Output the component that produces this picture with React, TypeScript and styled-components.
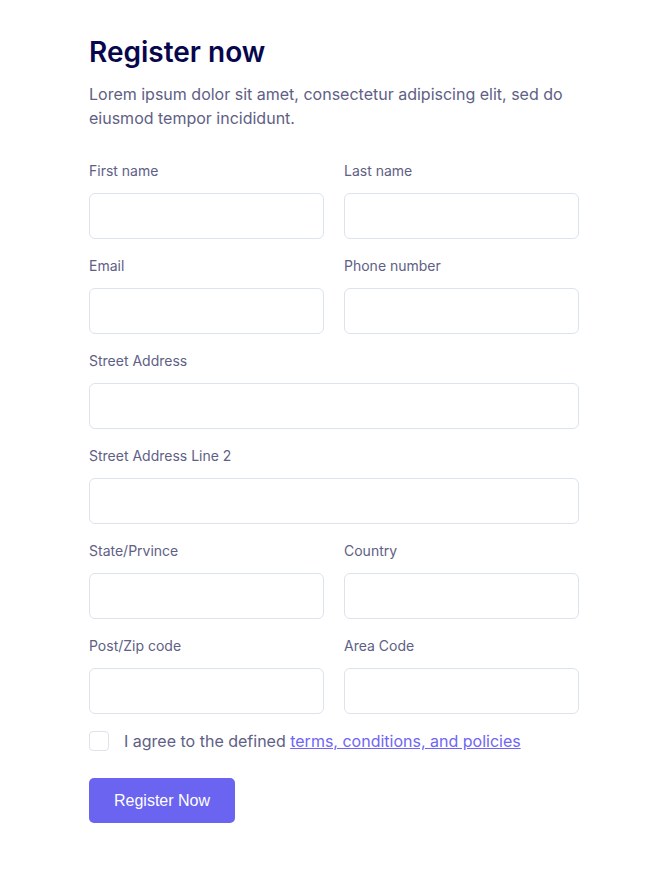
import React from "react";
import { createGlobalStyle, styled } from "styled-components";

const GlobalStyle = createGlobalStyle`
  * { box-sizing: border-box; }
  body {
    margin: 0;
    background: #ffffff;
    font-family: Inter, "Noto Sans", sans-serif;
  }
`;

type Field = { label: string; full?: boolean };

const fields: Field[] = [
  { label: "First name" },
  { label: "Last name" },
  { label: "Email" },
  { label: "Phone number" },
  { label: "Street Address", full: true },
  { label: "Street Address Line 2", full: true },
  { label: "State/Prvince" },
  { label: "Country" },
  { label: "Post/Zip code" },
  { label: "Area Code" },
];

function App() {
  return (
    <>
      <GlobalStyle />
      <Wrapper>
        <Title>Register now</Title>
        <Intro>
          Lorem ipsum dolor sit amet, consectetur adipiscing elit, sed do
          eiusmod tempor incididunt.
        </Intro>
        <Form onSubmit={(e) => e.preventDefault()}>
          <Grid>
            {fields.map((f) => (
              <Group key={f.label} $full={f.full}>
                <Label>{f.label}</Label>
                <Input type="text" />
              </Group>
            ))}
          </Grid>
          <Agree>
            <Check type="checkbox" />
            <AgreeText>
              I agree to the defined{" "}
              <TermsLink href="#">terms, conditions, and policies</TermsLink>
            </AgreeText>
          </Agree>
          <SubmitBtn type="submit">Register Now</SubmitBtn>
        </Form>
      </Wrapper>
    </>
  );
}

export default App;

const Wrapper = styled.div`
  width: 100%;
  padding: 34px 90px 0 89px;
`;

const Title = styled.h1`
  margin: 0 0 12px;
  font-size: 28px;
  line-height: 36px;
  font-weight: 600;
  color: #07074d;
`;

const Intro = styled.p`
  margin: 0;
  font-size: 16px;
  line-height: 24px;
  color: #5e6085;
`;

const Form = styled.form`
  margin-top: 31px;
`;

const Grid = styled.div`
  display: grid;
  grid-template-columns: 1fr 1fr;
  column-gap: 20px;
  row-gap: 17px;
`;

const Group = styled.div<{ $full?: boolean }>`
  display: flex;
  flex-direction: column;
  grid-column: ${({ $full }) => ($full ? "1 / -1" : "auto")};
`;

const Label = styled.label`
  margin-bottom: 12px;
  font-size: 14px;
  line-height: 20px;
  color: #5e6085;
`;

const Input = styled.input`
  width: 100%;
  height: 46px;
  padding: 0 16px;
  border: 1px solid #dde3ec;
  border-radius: 6px;
  background: #ffffff;
  font-family: inherit;
  font-size: 16px;
  color: #07074d;
  outline: none;
`;

const Agree = styled.div`
  display: flex;
  align-items: center;
  gap: 15px;
  margin-top: 17px;
`;

const Check = styled.input`
  appearance: none;
  width: 20px;
  height: 20px;
  margin: 0;
  border: 1px solid #dde3ec;
  border-radius: 4px;
  background: #ffffff;
`;

const AgreeText = styled.span`
  font-size: 16px;
  line-height: 20px;
  color: #5e6085;
`;

const TermsLink = styled.a`
  color: #6f66f3;
  text-decoration: underline;
`;

const SubmitBtn = styled.button`
  display: flex;
  align-items: center;
  justify-content: center;
  width: 146px;
  height: 45px;
  margin-top: 27px;
  border: none;
  border-radius: 5px;
  background: #6a64f1;
  font-family: "Liberation Sans", Arial, sans-serif;
  font-size: 16px;
  color: #ffffff;
`;
